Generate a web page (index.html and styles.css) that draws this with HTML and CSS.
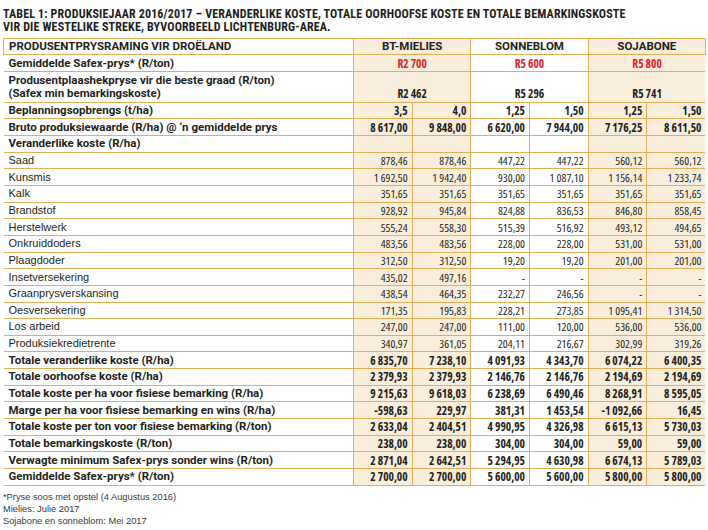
FILE: index.html
```html
<!DOCTYPE html>
<html lang="af">
<head>
<meta charset="utf-8">
<title>Tabel 1: Produksiejaar 2016/2017</title>
<link rel="stylesheet" href="styles.css">
</head>
<body>
<div class="page">
  <h1 class="title">TABEL 1: PRODUKSIEJAAR 2016/2017 – VERANDERLIKE KOSTE, TOTALE OORHOOFSE KOSTE EN TOTALE BEMARKINGSKOSTE<br>VIR DIE WESTELIKE STREKE, BYVOORBEELD LICHTENBURG-AREA.</h1>
  <table class="costs">
    <colgroup>
      <col class="c-label">
      <col class="c-num"><col class="c-num"><col class="c-num"><col class="c-num"><col class="c-num"><col class="c-num">
    </colgroup>
    <tbody>
      <tr class="head">
        <td class="label">PRODUSENTPRYSRAMING VIR DROËLAND</td>
        <td colspan="2" class="g1 center">BT-MIELIES</td>
        <td colspan="2" class="g2 center">SONNEBLOM</td>
        <td colspan="2" class="g3 center">SOJABONE</td>
      </tr>
      <tr class="bold">
        <td class="label">Gemiddelde Safex-prys* (R/ton)</td>
        <td colspan="2" class="g1 center red">R2 700</td>
        <td colspan="2" class="g2 center red">R5 600</td>
        <td colspan="2" class="g3 center red">R5 800</td>
      </tr>
      <tr class="bold double">
        <td class="label">Produsentplaashekpryse vir die beste graad (R/ton)<br>(Safex min bemarkingskoste)</td>
        <td colspan="2" class="g1 center bottom">R2 462</td>
        <td colspan="2" class="g2 center bottom">R5 296</td>
        <td colspan="2" class="g3 center bottom">R5 741</td>
      </tr>
      <tr class="bold">
        <td class="label">Beplanningsopbrengs (t/ha)</td>
        <td class="g1">3,5</td><td class="g1">4,0</td><td class="g2">1,25</td><td class="g2">1,50</td><td class="g3">1,25</td><td class="g3">1,50</td>
      </tr>
      <tr class="bold">
        <td class="label">Bruto produksiewaarde (R/ha) @ ‘n gemiddelde prys</td>
        <td class="g1">8 617,00</td><td class="g1">9 848,00</td><td class="g2">6 620,00</td><td class="g2">7 944,00</td><td class="g3">7 176,25</td><td class="g3">8 611,50</td>
      </tr>
      <tr class="bold">
        <td class="label">Veranderlike koste (R/ha)</td>
        <td class="g1"></td><td class="g1"></td><td class="g2"></td><td class="g2"></td><td class="g3"></td><td class="g3"></td>
      </tr>
      <tr>
        <td class="label">Saad</td>
        <td class="g1">878,46</td><td class="g1">878,46</td><td class="g2">447,22</td><td class="g2">447,22</td><td class="g3">560,12</td><td class="g3">560,12</td>
      </tr>
      <tr>
        <td class="label">Kunsmis</td>
        <td class="g1">1 692,50</td><td class="g1">1 942,40</td><td class="g2">930,00</td><td class="g2">1 087,10</td><td class="g3">1 156,14</td><td class="g3">1 233,74</td>
      </tr>
      <tr>
        <td class="label">Kalk</td>
        <td class="g1">351,65</td><td class="g1">351,65</td><td class="g2">351,65</td><td class="g2">351,65</td><td class="g3">351,65</td><td class="g3">351,65</td>
      </tr>
      <tr>
        <td class="label">Brandstof</td>
        <td class="g1">928,92</td><td class="g1">945,84</td><td class="g2">824,88</td><td class="g2">836,53</td><td class="g3">846,80</td><td class="g3">858,45</td>
      </tr>
      <tr>
        <td class="label">Herstelwerk</td>
        <td class="g1">555,24</td><td class="g1">558,30</td><td class="g2">515,39</td><td class="g2">516,92</td><td class="g3">493,12</td><td class="g3">494,65</td>
      </tr>
      <tr>
        <td class="label">Onkruiddoders</td>
        <td class="g1">483,56</td><td class="g1">483,56</td><td class="g2">228,00</td><td class="g2">228,00</td><td class="g3">531,00</td><td class="g3">531,00</td>
      </tr>
      <tr>
        <td class="label">Plaagdoder</td>
        <td class="g1">312,50</td><td class="g1">312,50</td><td class="g2">19,20</td><td class="g2">19,20</td><td class="g3">201,00</td><td class="g3">201,00</td>
      </tr>
      <tr>
        <td class="label">Insetversekering</td>
        <td class="g1">435,02</td><td class="g1">497,16</td><td class="g2">-</td><td class="g2">-</td><td class="g3">-</td><td class="g3">-</td>
      </tr>
      <tr>
        <td class="label">Graanprysverskansing</td>
        <td class="g1">438,54</td><td class="g1">464,35</td><td class="g2">232,27</td><td class="g2">246,56</td><td class="g3">-</td><td class="g3">-</td>
      </tr>
      <tr>
        <td class="label">Oesversekering</td>
        <td class="g1">171,35</td><td class="g1">195,83</td><td class="g2">228,21</td><td class="g2">273,85</td><td class="g3">1 095,41</td><td class="g3">1 314,50</td>
      </tr>
      <tr>
        <td class="label">Los arbeid</td>
        <td class="g1">247,00</td><td class="g1">247,00</td><td class="g2">111,00</td><td class="g2">120,00</td><td class="g3">536,00</td><td class="g3">536,00</td>
      </tr>
      <tr>
        <td class="label">Produksiekredietrente</td>
        <td class="g1">340,97</td><td class="g1">361,05</td><td class="g2">204,11</td><td class="g2">216,67</td><td class="g3">302,99</td><td class="g3">319,26</td>
      </tr>
      <tr class="bold">
        <td class="label">Totale veranderlike koste (R/ha)</td>
        <td class="g1">6 835,70</td><td class="g1">7 238,10</td><td class="g2">4 091,93</td><td class="g2">4 343,70</td><td class="g3">6 074,22</td><td class="g3">6 400,35</td>
      </tr>
      <tr class="bold">
        <td class="label">Totale oorhoofse koste (R/ha)</td>
        <td class="g1">2 379,93</td><td class="g1">2 379,93</td><td class="g2">2 146,76</td><td class="g2">2 146,76</td><td class="g3">2 194,69</td><td class="g3">2 194,69</td>
      </tr>
      <tr class="bold">
        <td class="label">Totale koste per ha voor fisiese bemarking (R/ha)</td>
        <td class="g1">9 215,63</td><td class="g1">9 618,03</td><td class="g2">6 238,69</td><td class="g2">6 490,46</td><td class="g3">8 268,91</td><td class="g3">8 595,05</td>
      </tr>
      <tr class="bold">
        <td class="label">Marge per ha voor fisiese bemarking en wins (R/ha)</td>
        <td class="g1">-598,63</td><td class="g1">229,97</td><td class="g2">381,31</td><td class="g2">1 453,54</td><td class="g3">-1 092,66</td><td class="g3">16,45</td>
      </tr>
      <tr class="bold">
        <td class="label">Totale koste per ton voor fisiese bemarking (R/ton)</td>
        <td class="g1">2 633,04</td><td class="g1">2 404,51</td><td class="g2">4 990,95</td><td class="g2">4 326,98</td><td class="g3">6 615,13</td><td class="g3">5 730,03</td>
      </tr>
      <tr class="bold">
        <td class="label">Totale bemarkingskoste (R/ton)</td>
        <td class="g1">238,00</td><td class="g1">238,00</td><td class="g2">304,00</td><td class="g2">304,00</td><td class="g3">59,00</td><td class="g3">59,00</td>
      </tr>
      <tr class="bold">
        <td class="label">Verwagte minimum Safex-prys sonder wins (R/ton)</td>
        <td class="g1">2 871,04</td><td class="g1">2 642,51</td><td class="g2">5 294,95</td><td class="g2">4 630,98</td><td class="g3">6 674,13</td><td class="g3">5 789,03</td>
      </tr>
      <tr class="bold">
        <td class="label">Gemiddelde Safex-prys* (R/ton)</td>
        <td class="g1">2 700,00</td><td class="g1">2 700,00</td><td class="g2">5 600,00</td><td class="g2">5 600,00</td><td class="g3">5 800,00</td><td class="g3">5 800,00</td>
      </tr>
    </tbody>
  </table>
  <div class="notes">
    <p>*Pryse soos met opstel (4 Augustus 2016)</p>
    <p>Mielies: Julie 2017</p>
    <p>Sojabone en sonneblom: Mei 2017</p>
  </div>
</div>
</body>
</html>
```
FILE: styles.css
```css
html, body {
  margin: 0;
  padding: 0;
  background: #ffffff;
}

.page {
  padding: 8px 3px 0 3px;
  color: #231f20;
}

.title {
  margin: 0 0 3px 0;
  font-family: "Roboto Condensed", "Open Sans", sans-serif;
  font-weight: 700;
  font-size: 12px;
  line-height: 13.4px;
  letter-spacing: 0.15px;
  color: #231f20;
}

.costs {
  width: 702px;
  border-collapse: collapse;
  table-layout: fixed;
}

.c-label { width: 350px; }
.c-num { width: 58.67px; }

.costs td {
  border: 1px solid #e3ae57;
  padding: 0 4px;
  height: 15.67px;
  line-height: 11px;
  font-family: "Open Sans", sans-serif;
  font-stretch: 75%;
  font-size: 11.5px;
  font-weight: 500;
  text-align: right;
  vertical-align: middle;
  white-space: nowrap;
}

.costs tr:not(.head) td:first-child { border-left: none; }
.costs tr:not(.head) td:last-child { border-right: none; }

.costs td.label {
  font-family: "Liberation Sans", Arial, sans-serif;
  font-stretch: normal;
  font-weight: 400;
  font-size: 11px;
  text-align: left;
  padding-left: 5px;
  background: #ffffff;
}

.costs .g1, .costs .g3 { background: #f9eedb; }
.costs .g2 { background: #ffffff; }

.costs tr.bold td { font-weight: 700; }
.costs tr.bold td.label,
.costs tr.head td {
  font-family: Roboto, sans-serif;
  font-stretch: normal;
  font-weight: 700;
  font-size: 11.5px;
}

.costs tr.double td { height: 26.5px; }
.costs tr.double td.label { line-height: 12.5px; }

.costs td.center { text-align: center; }
.costs td.bottom { vertical-align: bottom; padding-bottom: 3px; }
.costs td.red { color: #e4222b; }

.notes {
  margin-top: 5px;
  font-family: "Liberation Sans", Arial, sans-serif;
  font-size: 9.3px;
  line-height: 12px;
  color: #3a3a3a;
}

.notes p { margin: 0; }
```
